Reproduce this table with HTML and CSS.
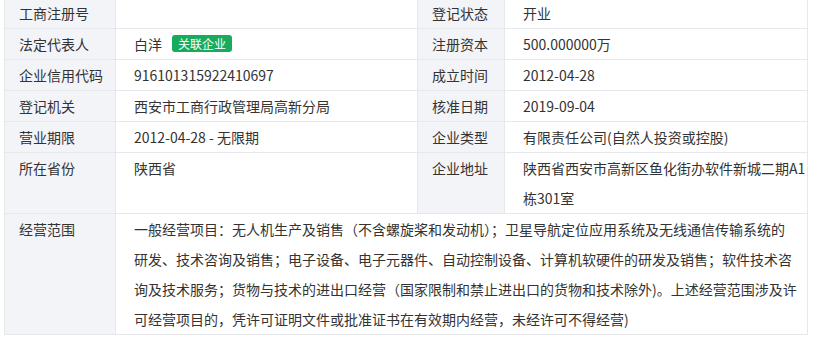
FILE: index.html
```html
<!DOCTYPE html>
<html lang="zh-CN">
<head>
<meta charset="utf-8">
<link rel="stylesheet" href="styles.css">
</head>
<body>
<div class="info">
  <div class="lbl">工商注册号</div>
  <div class="val"></div>
  <div class="lbl">登记状态</div>
  <div class="val v4">开业</div>

  <div class="lbl">法定代表人</div>
  <div class="val">白洋<span class="tag">关联企业</span></div>
  <div class="lbl">注册资本</div>
  <div class="val v4">500.000000万</div>

  <div class="lbl">企业信用代码</div>
  <div class="val">916101315922410697</div>
  <div class="lbl">成立时间</div>
  <div class="val v4">2012-04-28</div>

  <div class="lbl">登记机关</div>
  <div class="val">西安市工商行政管理局高新分局</div>
  <div class="lbl">核准日期</div>
  <div class="val v4">2019-09-04</div>

  <div class="lbl">营业期限</div>
  <div class="val">2012-04-28 - 无限期</div>
  <div class="lbl">企业类型</div>
  <div class="val v4">有限责任公司(自然人投资或控股)</div>

  <div class="lbl">所在省份</div>
  <div class="val">陕西省</div>
  <div class="lbl">企业地址</div>
  <div class="val v4">陕西省西安市高新区鱼化街办软件新城二期A1栋301室</div>

  <div class="lbl">经营范围</div>
  <div class="val scope">一般经营项目：无人机生产及销售（不含螺旋桨和发动机）；卫星导航定位应用系统及无线通信传输系统的研发、技术咨询及销售；电子设备、电子元器件、自动控制设备、计算机软硬件的研发及销售；软件技术咨询及技术服务；货物与技术的进出口经营（国家限制和禁止进出口的货物和技术除外)。上述经营范围涉及许可经营项目的，凭许可证明文件或批准证书在有效期内经营，未经许可不得经营)</div>
</div>
</body>
</html>
```

FILE: styles.css
```css
html, body {
  margin: 0;
  padding: 0;
  background: #fff;
}

body {
  font-family: "Noto Sans CJK SC", "Microsoft YaHei", sans-serif;
  font-size: 14px;
  color: #333;
}

.info {
  display: grid;
  grid-template-columns: 111px 302px 87px 303px;
  width: 804px;
  margin: -3px 0 0 4px;
  border-left: 1px solid #e6e8ec;
  border-top: 1px solid #e6e8ec;
  box-sizing: border-box;
}

.lbl,
.val {
  border-right: 1px solid #e6e8ec;
  border-bottom: 1px solid #e6e8ec;
  line-height: 30px;
  min-height: 30px;
  box-sizing: content-box;
}

.lbl {
  background: #f3f4f8;
  padding: 0 0 0 14px;
  color: #333;
}

.val {
  padding: 0 4px 0 18px;
  color: #333;
}

.val.v4 {
  padding-right: 0;
}

.scope {
  grid-column: 2 / 5;
  padding-right: 9px;
}

.tag {
  display: inline-block;
  margin-left: 10px;
  padding: 0 6px;
  height: 17px;
  line-height: 17px;
  font-size: 12px;
  color: #fff;
  background: #17ab5e;
  border-radius: 3px;
  vertical-align: 1px;
}
```
